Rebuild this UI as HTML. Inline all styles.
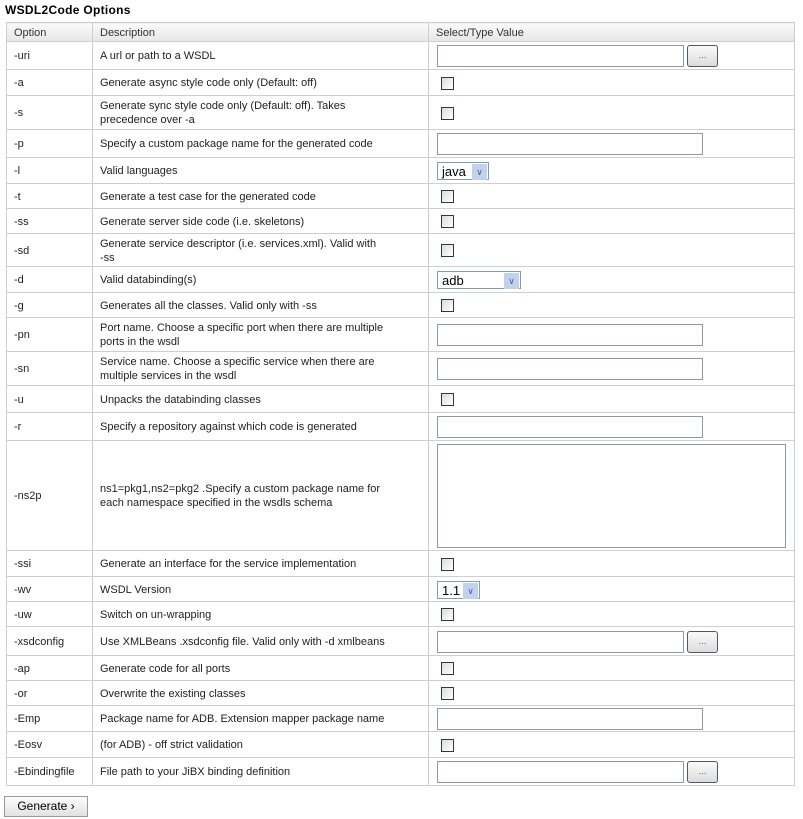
<!DOCTYPE html>
<html><head><style>
body{margin:0;background:#fff;font-family:"Liberation Sans",Arial,sans-serif;font-size:11px;color:#222;}
h1{position:absolute;left:5px;top:3px;margin:0;font-size:12px;font-weight:bold;color:#000;letter-spacing:0.3px;}
table{position:absolute;left:6px;top:22px;border-collapse:collapse;width:789px;table-layout:fixed;}
td{border:1px solid #cfcfcf;padding:1px 0 0 7px;vertical-align:middle;line-height:14px;}
td.d{white-space:nowrap;overflow:hidden;}
tr.h td{background:linear-gradient(#fafafa,#e6e6e6);height:17px;color:#333;}
.t{display:inline-block;width:264px;height:20px;border:1px solid #8a9aaa;vertical-align:middle;margin-left:1px;}
.t2{width:245px;}
.b{display:inline-block;width:29px;height:20px;border:1px solid #4a5a6a;border-radius:3px;background:linear-gradient(#fafafa,#dcdcdc);vertical-align:middle;margin-left:3px;text-align:center;line-height:18px;font-size:9px;color:#555;}
.c{display:inline-block;width:11px;height:11px;border:1px solid #2a3a4a;background:linear-gradient(135deg,#dcdcdc,#fff);margin-left:5px;vertical-align:middle;}
.s{display:inline-block;height:18px;border:1px solid #7f9db9;vertical-align:middle;position:relative;font-size:13px;line-height:18px;padding-left:4px;box-sizing:border-box;margin-left:1px;color:#000;}
.s i{position:absolute;right:1px;top:1px;width:15px;height:16px;background:#c1d2ee;color:#4d6185;font-style:normal;font-size:9px;text-align:center;line-height:16px;}
.ta{display:inline-block;width:347px;height:102px;border:1px solid #8a9aaa;margin-left:1px;vertical-align:middle;}
.g{position:absolute;left:4px;top:796px;width:82px;height:19px;border:1px solid #9a9a9a;background:linear-gradient(#fdfdfd,#e2e2e2);font-size:12px;line-height:19px;text-align:center;color:#000;}
</style></head><body>
<h1>WSDL2Code Options</h1>
<table>
<colgroup><col style="width:86px"><col style="width:336px"><col></colgroup>
<tr class="h"><td>Option</td><td>Description</td><td>Select/Type Value</td></tr>
<tr style="height:28px"><td>-uri</td><td class="d">A url or path to a WSDL</td><td><span class="t t2"></span><span class="b">...</span></td></tr>
<tr style="height:26px"><td>-a</td><td class="d">Generate async style code only (Default: off)</td><td><span class="c"></span></td></tr>
<tr style="height:34px"><td>-s</td><td class="d">Generate sync style code only (Default: off). Takes<br>precedence over -a</td><td><span class="c"></span></td></tr>
<tr style="height:28px"><td>-p</td><td class="d">Specify a custom package name for the generated code</td><td><span class="t"></span></td></tr>
<tr style="height:26px"><td>-l</td><td class="d">Valid languages</td><td><span class="s" style="width:52px">java<i>&#x2228;</i></span></td></tr>
<tr style="height:25px"><td>-t</td><td class="d">Generate a test case for the generated code</td><td><span class="c"></span></td></tr>
<tr style="height:25px"><td>-ss</td><td class="d">Generate server side code (i.e. skeletons)</td><td><span class="c"></span></td></tr>
<tr style="height:33px"><td>-sd</td><td class="d">Generate service descriptor (i.e. services.xml). Valid with<br>-ss</td><td><span class="c"></span></td></tr>
<tr style="height:26px"><td>-d</td><td class="d">Valid databinding(s)</td><td><span class="s" style="width:84px">adb<i>&#x2228;</i></span></td></tr>
<tr style="height:25px"><td>-g</td><td class="d">Generates all the classes. Valid only with -ss</td><td><span class="c"></span></td></tr>
<tr style="height:34px"><td>-pn</td><td class="d">Port name. Choose a specific port when there are multiple<br>ports in the wsdl</td><td><span class="t"></span></td></tr>
<tr style="height:34px"><td>-sn</td><td class="d">Service name. Choose a specific service when there are<br>multiple services in the wsdl</td><td><span class="t"></span></td></tr>
<tr style="height:27px"><td>-u</td><td class="d">Unpacks the databinding classes</td><td><span class="c"></span></td></tr>
<tr style="height:28px"><td>-r</td><td class="d">Specify a repository against which code is generated</td><td><span class="t"></span></td></tr>
<tr style="height:110px"><td>-ns2p</td><td class="d">ns1=pkg1,ns2=pkg2 .Specify a custom package name for<br>each namespace specified in the wsdls schema</td><td><span class="ta"></span></td></tr>
<tr style="height:26px"><td>-ssi</td><td class="d">Generate an interface for the service implementation</td><td><span class="c"></span></td></tr>
<tr style="height:25px"><td>-wv</td><td class="d">WSDL Version</td><td><span class="s" style="width:43px">1.1<i>&#x2228;</i></span></td></tr>
<tr style="height:25px"><td>-uw</td><td class="d">Switch on un-wrapping</td><td><span class="c"></span></td></tr>
<tr style="height:29px"><td>-xsdconfig</td><td class="d">Use XMLBeans .xsdconfig file. Valid only with -d xmlbeans</td><td><span class="t t2"></span><span class="b">...</span></td></tr>
<tr style="height:25px"><td>-ap</td><td class="d">Generate code for all ports</td><td><span class="c"></span></td></tr>
<tr style="height:25px"><td>-or</td><td class="d">Overwrite the existing classes</td><td><span class="c"></span></td></tr>
<tr style="height:26px"><td>-Emp</td><td class="d">Package name for ADB. Extension mapper package name</td><td><span class="t"></span></td></tr>
<tr style="height:26px"><td>-Eosv</td><td class="d">(for ADB) - off strict validation</td><td><span class="c"></span></td></tr>
<tr style="height:28px"><td>-Ebindingfile</td><td class="d">File path to your JiBX binding definition</td><td><span class="t t2"></span><span class="b">...</span></td></tr>
</table>
<div class="g">Generate &#x203A;</div>
</body></html>
